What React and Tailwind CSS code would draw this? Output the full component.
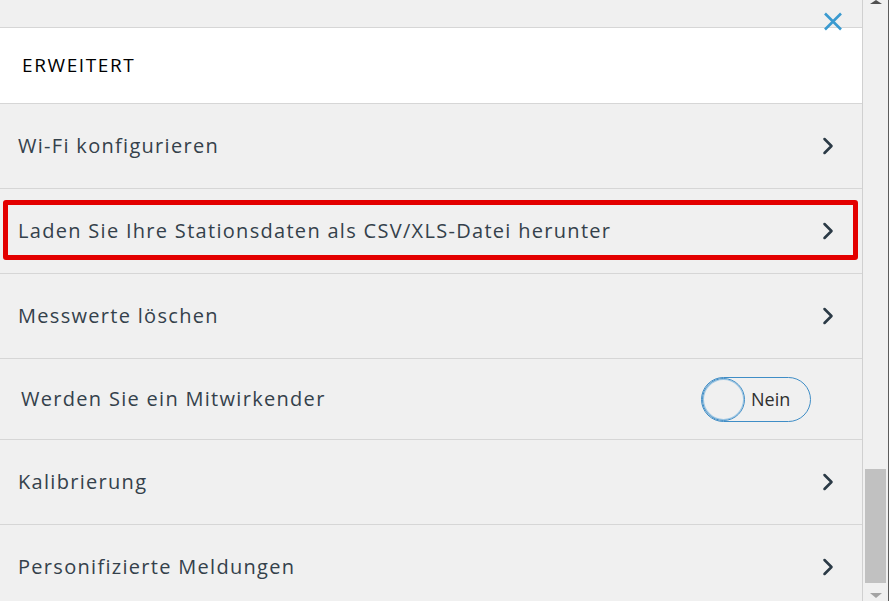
import { ChevronRight } from 'lucide-react';

const rows = [
  { label: 'Wi-Fi konfigurieren' },
  { label: 'Laden Sie Ihre Stationsdaten als CSV/XLS-Datei herunter', marked: true },
  { label: 'Messwerte löschen' },
  { label: 'Werden Sie ein Mitwirkender', toggle: true },
  { label: 'Kalibrierung' },
  { label: 'Personifizierte Meldungen' },
];

function Toggle() {
  return (
    <div className="flex items-center h-[45px] w-[110px] rounded-full border border-[#3f8dc6] bg-[#f0f0f0] mr-[51px]">
      <div className="h-[43px] w-[43px] rounded-full border border-[#3f8dc6] ring-1 ring-inset ring-[#9cc6e4] bg-[#f0f0f0]" />
      <span className="ml-[6px] text-[18px] font-medium text-[#2f2f2f]">Nein</span>
    </div>
  );
}

function Row({ label, marked, toggle }) {
  return (
    <div
      className={`relative flex items-center justify-between border-b border-[#d6d6d6] ${
        toggle ? 'h-[81px] pl-[21px]' : 'h-[85px] pl-[18px]'
      }`}
    >
      <span className="text-[20px] text-[#34414b] tracking-[1.3px]">{label}</span>
      {toggle ? (
        <Toggle />
      ) : (
        <ChevronRight size={28} strokeWidth={2.2} className="mr-[20px] text-[#2b3a46]" />
      )}
      {marked && (
        <div className="absolute left-[3px] right-[4px] top-[11px] bottom-[13px] border-[5px] border-[#e30000] rounded-[3px]" />
      )}
    </div>
  );
}

export default function App() {
  return (
    <div className="flex h-[601px] w-[889px] overflow-hidden bg-[#f0f0f0] font-['Open_Sans',sans-serif]">
      <div className="w-[863px] shrink-0 border-r border-[#d0d0d0]">
        <div className="relative h-[28px] border-b border-[#d6d6d6]">
          <svg
            className="absolute left-[823px] top-[12px]"
            width="20"
            height="19"
            viewBox="0 0 20 19"
          >
            <path d="M2 1.5 L18 17.5 M18 1.5 L2 17.5" stroke="#3a9ad0" strokeWidth="2.6" strokeLinecap="butt" />
          </svg>
        </div>
        <div className="flex h-[76px] items-center bg-white pl-[22px] border-b border-[#d6d6d6]">
          <span className="text-[19px] tracking-[1.6px] text-black">ERWEITERT</span>
        </div>
        {rows.map((r) => (
          <Row key={r.label} {...r} />
        ))}
      </div>
      <div className="relative flex w-[25px] flex-col items-center bg-[#f0f0f0]">
        <div className="h-0 w-0 border-x-[6px] border-x-transparent border-b-[4px] border-b-[#505050]" />
        <div className="mt-[465px] h-[114px] w-[21px] bg-[#c1c1c1]" />
        <div className="mt-[10px] h-0 w-0 border-x-[6px] border-x-transparent border-t-[5px] border-t-[#a3a3a3]" />
      </div>
      <div className="w-px bg-[#5c5c5c]" />
    </div>
  );
}
